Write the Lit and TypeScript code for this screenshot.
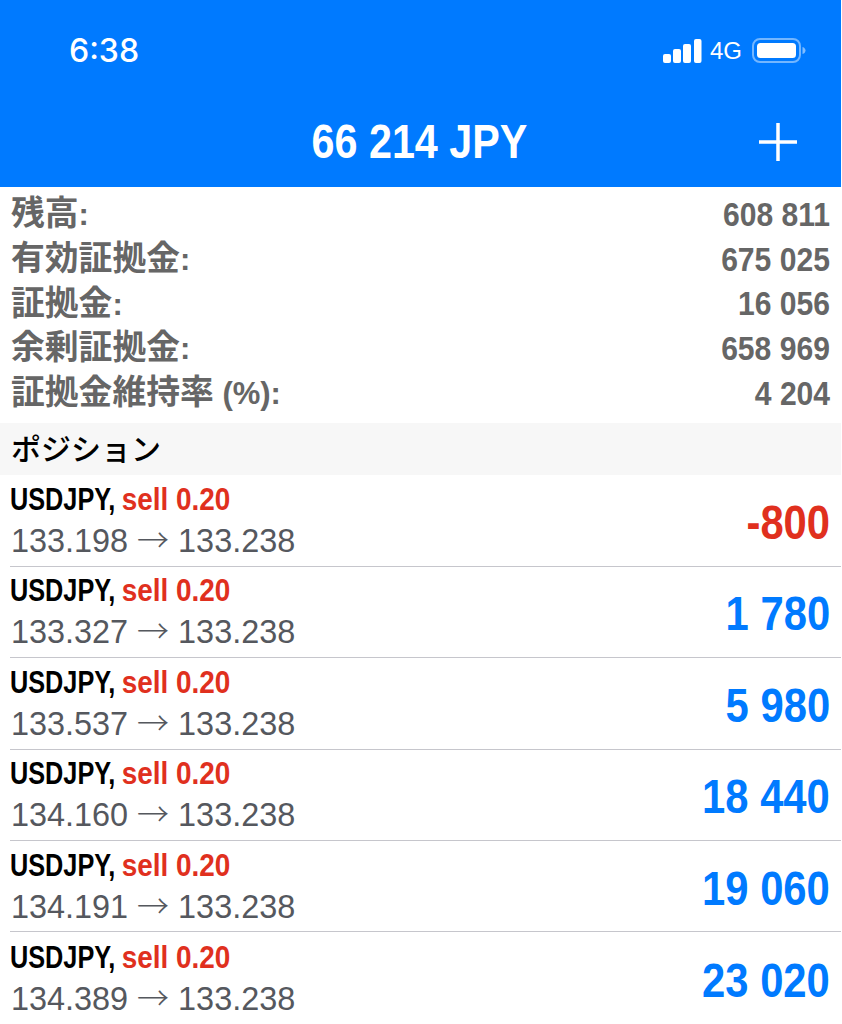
import { LitElement, html, css } from "lit";
import { customElement } from "lit/decorators.js";

const summary = [
  ["残高:", "608 811"],
  ["有効証拠金:", "675 025"],
  ["証拠金:", "16 056"],
  ["余剰証拠金:", "658 969"],
  ["証拠金維持率 (%):", "4 204"],
];
const positions = [
  ["133.198", "-800", true],
  ["133.327", "1 780", false],
  ["133.537", "5 980", false],
  ["134.160", "18 440", false],
  ["134.191", "19 060", false],
  ["134.389", "23 020", false],
] as const;

@customElement("app-root")
export class AppRoot extends LitElement {
  static styles = css`
    :host { display: block; width: 841px; height: 1024px; overflow: hidden; background: #fff;
      font-family: "Liberation Sans", "Noto Sans CJK JP", sans-serif; }
    .head { background: #007aff; height: 187px; color: #fff; display: flex; flex-direction: column; }
    .status { display: flex; justify-content: space-between; align-items: flex-start; padding: 31px 35px 0 69px; height: 65px; box-sizing: border-box; }
    .time { font: 500 32px/38px Inter, sans-serif; margin-top: 1px; }
    .ind { display: flex; align-items: center; }
    .net { font: 400 24px/24px "Liberation Sans", sans-serif; margin: 7px 10px 0 8px; }
    .nav { display: grid; grid-template-columns: 1fr auto 1fr; align-items: center; margin-top: 49px; padding-right: 2px; }
    .title { grid-column: 2; font-size: 48px; line-height: 56px; font-weight: 700; transform: scaleX(.86); }
    .plus { justify-self: end; display: block; margin-right: 42px; }
    .sum { padding: 5px 11px 0 11px; height: 236px; box-sizing: border-box; }
    .sum-row { display: flex; justify-content: space-between; align-items: center; height: 44.8px; color: #666; font-weight: 700; }
    .lab { font-size: 33.8px; margin-bottom: 8px; }
    .lab-en { font-family: "Liberation Sans", sans-serif; font-size: 31px; }
    .val { font-size: 34px; transform: scaleX(.885); transform-origin: right center; }
    .sec { height: 52.4px; background: #f7f7f7; display: flex; align-items: center; padding: 0 0 4px 11px; box-sizing: border-box; color: #000; font: 500 30px/48px "Noto Sans CJK JP", sans-serif; }
    .pos { height: 91.4px; box-sizing: border-box; margin-left: 10px; padding: 0 11px 3px 0; border-bottom: 1px solid #c6c6cc;
      display: flex; justify-content: space-between; align-items: center; }
    .pos:last-child { border-bottom: 0; }
    .l1 { font-size: 31px; line-height: 44px; font-weight: 700; transform: scaleX(.815); transform-origin: left center; white-space: nowrap; }
    .red { display: inline-block; color: #e0301e; transform: scaleX(1.105); transform-origin: left center; margin-left: -1px; }
    .l2 { font-size: 32.4px; line-height: 38px; color: #55585e; white-space: nowrap; margin-left: 1px; }
    .arrow { font-family: "Noto Sans CJK JP", sans-serif; font-weight: 300; font-size: 32px; line-height: 0; }
    .pl { font-size: 48px; font-weight: 700; transform: scaleX(.87); transform-origin: right center; color: #007aff; padding-top: 7px; }
    .pl.neg { color: #e0301e; }
    svg { display: block; }
  `;

  render() {
    return html`
      <div class="head">
        <div class="status">
          <span class="time">6:38</span>
          <div class="ind">
            <svg width="39" height="24" viewBox="0 0 39 24" fill="#fff" style="margin-top:7px">
              <rect x="0" y="15" width="8" height="9" rx="2"/>
              <rect x="10" y="10" width="8" height="14" rx="2"/>
              <rect x="20" y="5" width="8" height="19" rx="2"/>
              <rect x="31" y="0" width="7.5" height="24" rx="2"/>
            </svg>
            <span class="net">4G</span>
            <svg width="54" height="25" viewBox="0 0 54 25" style="margin-top:7px">
              <rect x="1" y="1" width="47" height="23" rx="7" fill="none" stroke="#fff" stroke-opacity=".45" stroke-width="2"/>
              <rect x="5" y="5" width="39" height="15" rx="3.500" fill="#fff"/>
              <path d="M50.500 9c2 .5 3 2 3 3.500s-1 3-3 3.500z" fill="#fff" fill-opacity=".5"/>
            </svg>
          </div>
        </div>
        <div class="nav">
          <span class="title">66 214 JPY</span>
          <svg class="plus" width="38" height="38" viewBox="0 0 38 38" stroke="#fff" stroke-width="3.500"><path d="M19 0v38M0 19h38"/></svg>
        </div>
      </div>
      <div class="sum">
        ${summary.map(([k, v]) => {
          const m = k.match(/^(.*?)( \(%\))?:$/)!;
          return html`<div class="sum-row"><span class="lab">${m[1]}<span class="lab-en">${m[2] ?? ""}:</span></span><span class="val">${v}</span></div>`;
        })}
      </div>
      <div class="sec">ポジション</div>
      ${positions.map(([open, pl, neg]) => html`
        <div class="pos">
          <div>
            <div class="l1">USDJPY, <span class="red">sell 0.20</span></div>
            <div class="l2">${open} <span class="arrow">→</span> 133.238</div>
          </div>
          <span class="pl ${neg ? "neg" : ""}">${pl}</span>
        </div>`)}
    `;
  }
}
